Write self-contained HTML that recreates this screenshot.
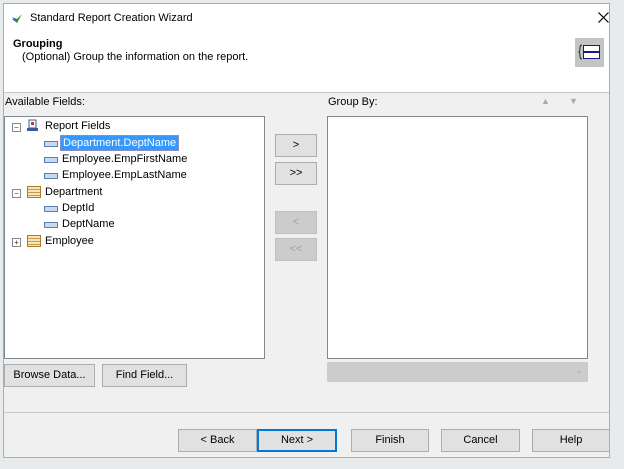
<!DOCTYPE html><html><head><style>
body{margin:0;width:624px;height:469px;background:#e8ebec;font-family:"Liberation Sans",sans-serif;font-size:11px;color:#000;position:relative;overflow:hidden}
.a{position:absolute}
.win{left:3px;top:3px;width:607px;height:455px;background:#f0f0f0;border:1px solid #8fb6c4;box-sizing:border-box}
.btn{position:absolute;background:#e1e1e1;border:1px solid #adadad;box-sizing:border-box;text-align:center;font-size:11px;line-height:21px}
.dis{background:#cccccc;border-color:#bfbfbf;color:#a0a0a0}
.box{position:absolute;background:#fff;border:1px solid #828790;box-sizing:border-box}
.fi{position:absolute;width:12px;height:4px;border:1px solid #5a7fb0;background:#c8d8ee}
.pm{position:absolute;width:7px;height:7px;border:1px solid #888;background:#fff;font-size:8px;line-height:7px;text-align:center;color:#333}
.tb{position:absolute;width:12px;height:10px;border:1px solid #b07a2a;background:repeating-linear-gradient(#f6e7b8 0 2px,#c99a4a 2px 3px)}
</style></head><body>
<div class="a win"></div>
<div class="a" style="left:4px;top:4px;width:605px;height:88px;background:#fff;border-bottom:1px solid #c8c8c8"></div>
<svg class="a" style="left:11px;top:12px" width="12" height="12"><path d="M1 7 L6 11 L11 2 L6 7Z" fill="#2a8a3a"/><path d="M1 5 L6 7 L4 9Z" fill="#3a6ec8"/></svg>
<div class="a" style="left:30px;top:12px;font-size:11px">Standard Report Creation Wizard</div>
<svg class="a" style="left:598px;top:12px" width="11" height="11"><path d="M0.5 0.5L10.5 10.5M10.5 0.5L0.5 10.5" stroke="#000" stroke-width="1.2"/></svg>
<div class="a" style="left:13px;top:38px;font-weight:bold">Grouping</div>
<div class="a" style="left:22px;top:51px">(Optional) Group the information on the report.</div>
<div class="a" style="left:575px;top:38px;width:29px;height:29px;background:#c4c4c4"></div>
<svg class="a" style="left:577px;top:40px" width="25" height="25"><rect x="6.5" y="5.5" width="16" height="6" fill="#fff" stroke="#1a1a7a"/><rect x="6.5" y="12.5" width="16" height="6" fill="#fff" stroke="#1a1a7a"/><path d="M5 5 Q3 5 3 8 Q3 12 1.5 12 Q3 12 3 16 Q3 19 5 19" fill="none" stroke="#222"/></svg>
<div class="a" style="left:5px;top:96px">Available Fields:</div>
<div class="a" style="left:328px;top:96px">Group By:</div>
<div class="a" style="left:541px;top:96px;color:#aaa;font-size:9px">▲</div>
<div class="a" style="left:569px;top:96px;color:#aaa;font-size:9px">▼</div>
<div class="box" style="left:4px;top:116px;width:261px;height:243px"></div>
<div class="pm" style="left:12px;top:123px">−</div><svg class="a" style="left:26px;top:119px" width="13" height="13"><rect x="3" y="1" width="7" height="8" fill="#fff" stroke="#3a5a9a"/><rect x="1" y="9" width="11" height="3" fill="#3a5a9a"/><rect x="5" y="3" width="3" height="3" fill="#c33"/></svg>
<div class="a" style="left:45px;top:120px">Report Fields</div>
<div class="fi" style="left:44px;top:141px"></div>
<div class="a" style="left:60px;top:135px;background:#3399ff;color:#fff;padding:1px 2px;border:1px dotted #99c">Department.DeptName</div>
<div class="fi" style="left:44px;top:157px"></div><div class="a" style="left:62px;top:153px">Employee.EmpFirstName</div>
<div class="fi" style="left:44px;top:173px"></div><div class="a" style="left:62px;top:169px">Employee.EmpLastName</div>
<div class="pm" style="left:12px;top:189px">−</div><div class="tb" style="left:27px;top:186px"></div><div class="a" style="left:45px;top:186px">Department</div>
<div class="fi" style="left:44px;top:206px"></div><div class="a" style="left:62px;top:202px">DeptId</div>
<div class="fi" style="left:44px;top:222px"></div><div class="a" style="left:62px;top:218px">DeptName</div>
<div class="pm" style="left:12px;top:238px">+</div><div class="tb" style="left:27px;top:235px"></div><div class="a" style="left:45px;top:235px">Employee</div>
<div class="btn" style="left:275px;top:134px;width:42px;height:23px">&gt;</div>
<div class="btn" style="left:275px;top:162px;width:42px;height:23px">&gt;&gt;</div>
<div class="btn dis" style="left:275px;top:211px;width:42px;height:23px">&lt;</div>
<div class="btn dis" style="left:275px;top:238px;width:42px;height:23px">&lt;&lt;</div>
<div class="box" style="left:327px;top:116px;width:261px;height:243px"></div>
<div class="a" style="left:327px;top:362px;width:261px;height:20px;background:#cccccc"><span class="a" style="right:5px;top:3px;color:#aaa;font-size:9px">⌄</span></div>
<div class="btn" style="left:4px;top:364px;width:91px;height:23px">Browse Data...</div>
<div class="btn" style="left:102px;top:364px;width:85px;height:23px">Find Field...</div>
<div class="a" style="left:4px;top:412px;width:605px;height:1px;background:#c8c8c8"></div>
<div class="btn" style="left:178px;top:429px;width:79px;height:23px">&lt; Back</div>
<div class="btn" style="left:257px;top:429px;width:80px;height:23px;border:2px solid #0078d7;line-height:19px">Next &gt;</div>
<div class="btn" style="left:351px;top:429px;width:78px;height:23px">Finish</div>
<div class="btn" style="left:441px;top:429px;width:79px;height:23px">Cancel</div>
<div class="btn" style="left:532px;top:429px;width:78px;height:23px">Help</div>
</body></html>
